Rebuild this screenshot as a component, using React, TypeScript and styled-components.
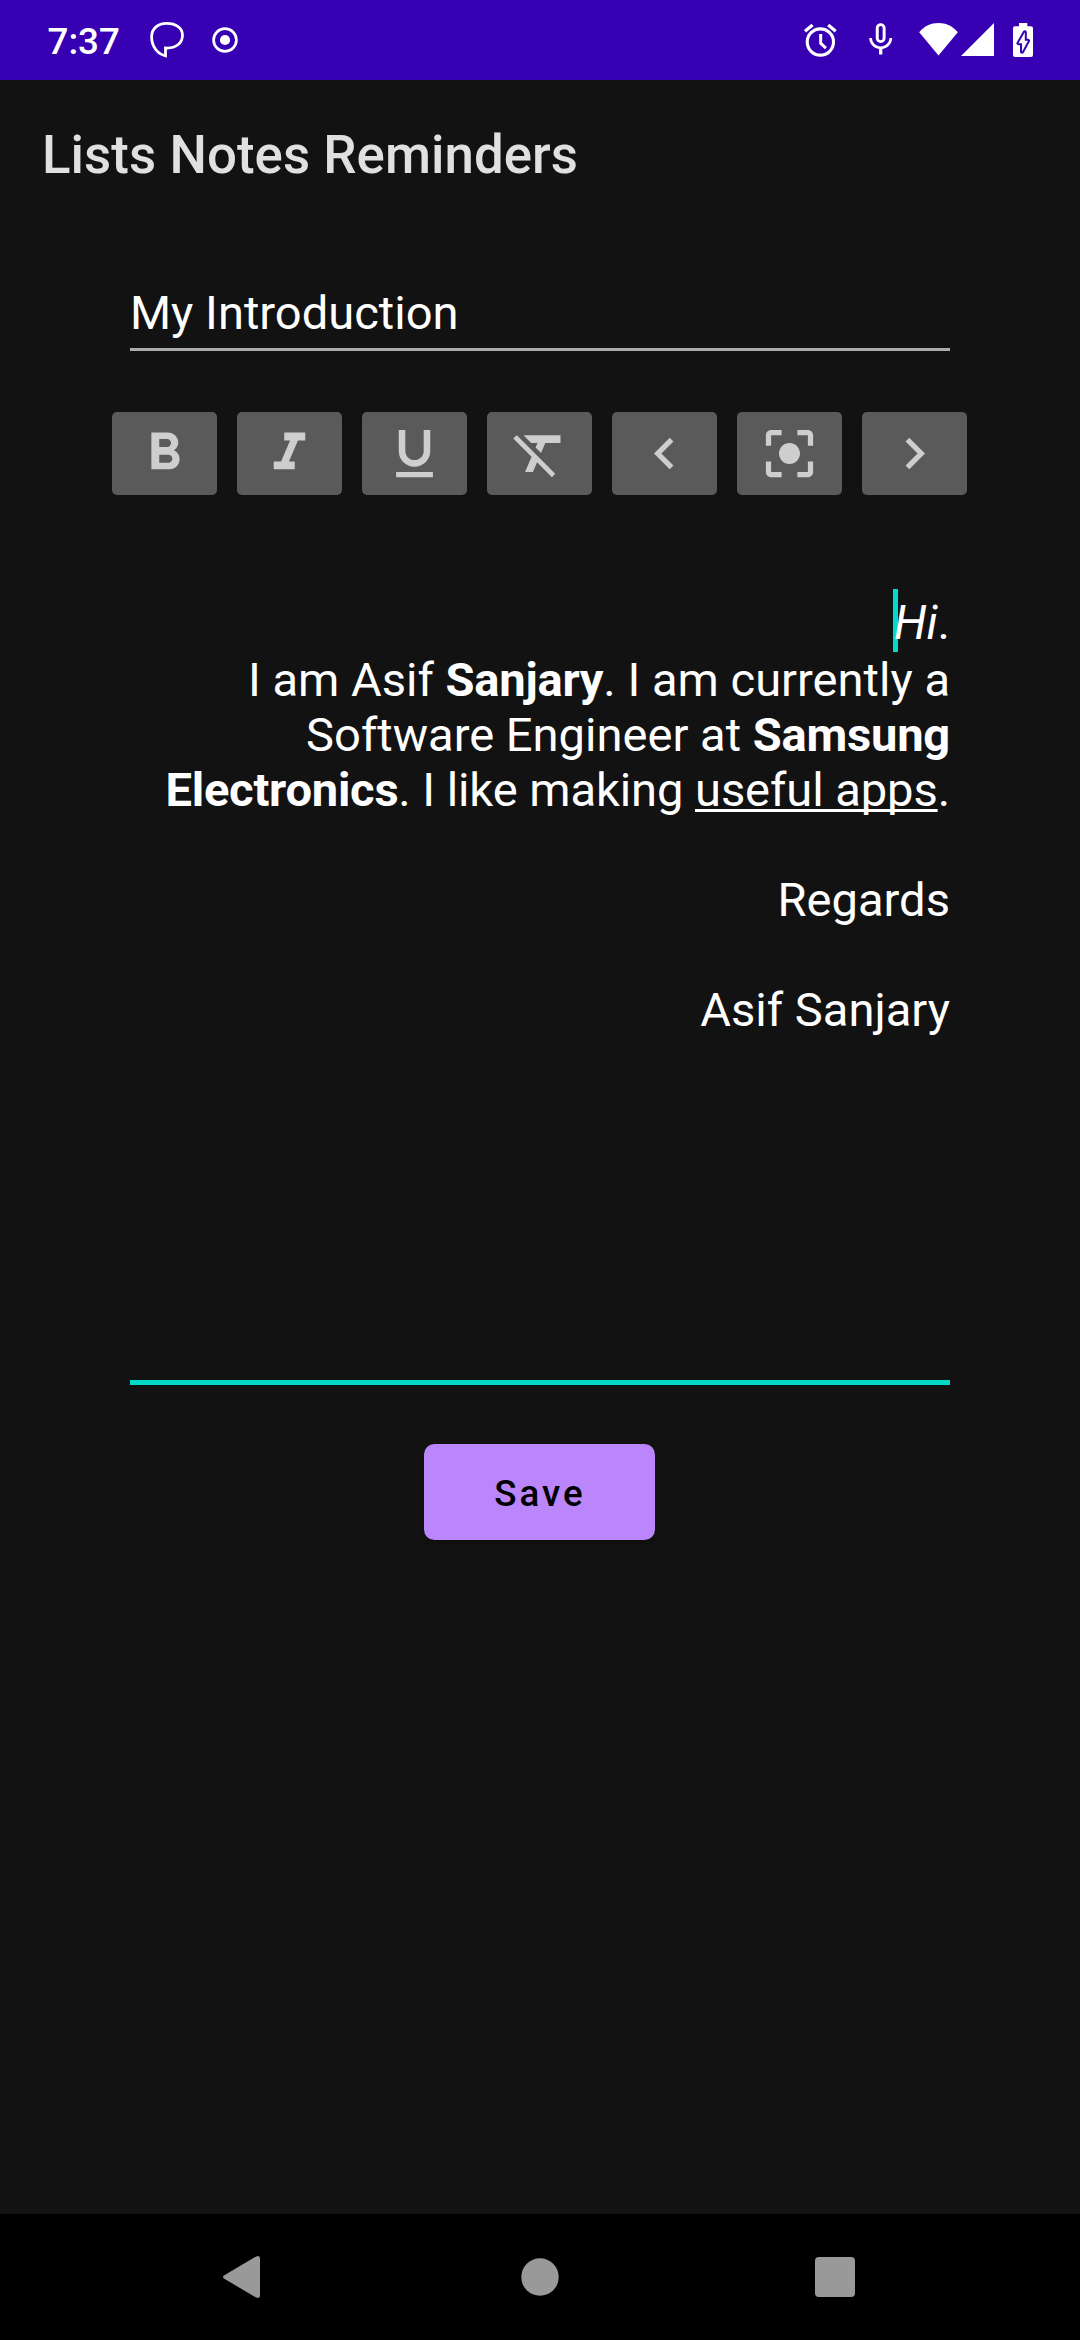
import React from 'react';
import styled, { createGlobalStyle } from 'styled-components';
import {
  MdCenterFocusStrong,
  MdChevronLeft,
  MdChevronRight,
  MdFormatBold,
  MdFormatClear,
  MdFormatItalic,
  MdFormatUnderlined,
  MdMicNone,
} from 'react-icons/md';

const GlobalStyle = createGlobalStyle`
  *, *::before, *::after { box-sizing: border-box; }
  body {
    margin: 0;
    background: #121212;
    font-family: Roboto, "Noto Sans", sans-serif;
  }
`;

const Screen = styled.div`
  display: flex;
  flex-direction: column;
  width: 1080px;
  height: 2340px;
  background: #121212;
  color: #fff;
  overflow: hidden;
`;

const StatusBar = styled.header`
  display: flex;
  align-items: center;
  height: 80px;
  padding: 0 47px;
  background: #3700b3;
`;

const Clock = styled.span`
  width: 103px;
  padding: 2px 0 0 0.5px;
  font-size: 36.75px;
  font-weight: 500;
  line-height: 43px;
`;

const StatusGlyph = styled.svg<{ $gap?: number }>`
  flex: none;
  display: block;
  margin-left: ${({ $gap = 0 }) => $gap}px;
  fill: #fff;
`;

const StatusIcons = styled.div`
  display: flex;
  align-items: center;
  margin-left: auto;

  svg { flex: none; }
`;

const MicIcon = styled(MdMicNone)`
  margin-left: 21px;
`;

const AppBar = styled.h1`
  margin: 0;
  height: 147px;
  padding: 3px 42px 0;
  display: flex;
  align-items: center;
  font-size: 52.8px;
  font-weight: 500;
  line-height: 62px;
  letter-spacing: 0.06px;
  color: #e0e0e0;
`;

const Main = styled.main`
  flex: 1;
  display: flex;
  flex-direction: column;
  align-items: center;
`;

const TitleField = styled.div`
  width: 820px;
  height: 66px;
  margin-top: 58px;
  border-bottom: 3px solid #abacac;
  font-size: 47.1px;
  line-height: 55px;
  white-space: nowrap;
`;

const Toolbar = styled.div`
  display: flex;
  gap: 20px;
  margin-top: 61px;
  padding-right: 1px;
`;

const ToolButton = styled.button`
  display: flex;
  align-items: center;
  justify-content: center;
  width: 105px;
  height: 83px;
  padding: 0;
  border: 0;
  border-radius: 5px;
  background: #5a5a5b;
  color: #cecece;

  svg { width: 63px; height: 63px; }
`;

const NoteField = styled.div`
  width: 820px;
  height: 796px;
  margin-top: 94px;
  border-bottom: 5px solid #03dac5;
  font-size: 47.1px;
  line-height: 55px;
  text-align: right;
`;

const NoteLine = styled.p<{ $first?: boolean; $tight?: boolean }>`
  margin: 0;
  height: ${({ $first }) => ($first ? 63 : 55)}px;
  padding-top: ${({ $first }) => ($first ? 6 : 0)}px;
  letter-spacing: ${({ $tight }) => ($tight ? '-0.08px' : 'normal')};
  white-space: nowrap;

  b { font-weight: 700; letter-spacing: -0.24px; }
  u {
    text-decoration-thickness: 3px;
    text-underline-offset: 3px;
    text-decoration-skip-ink: none;
  }
`;

const CaretAnchor = styled.span`
  position: relative;
`;

const Caret = styled.span`
  position: absolute;
  left: -1px;
  top: -6px;
  width: 5px;
  height: 63px;
  background: #03dac5;
`;

const Emphasis = styled.i`
  position: relative;
`;

const SaveButton = styled.button`
  width: 231px;
  height: 96px;
  margin-top: 59px;
  margin-right: 1px;
  padding: 3px 0 0 1px;
  border: 0;
  border-radius: 10.5px;
  background: #bb86fc;
  color: #000;
  font-family: inherit;
  font-size: 36.75px;
  font-weight: 500;
  line-height: 43px;
  letter-spacing: 3px;
  box-shadow: 0 3px 5px rgba(0, 0, 0, 0.2);
`;

const NavBar = styled.nav`
  display: flex;
  align-items: center;
  justify-content: space-between;
  height: 126px;
  padding: 0 213px;
  background: #000;
`;

const NavGlyph = styled.svg`
  display: block;
  fill: #999;
`;

const tools = [
  { name: 'Bold', Icon: MdFormatBold },
  { name: 'Italic', Icon: MdFormatItalic },
  { name: 'Underline', Icon: MdFormatUnderlined },
  { name: 'Clear formatting', Icon: MdFormatClear },
  { name: 'Align left', Icon: MdChevronLeft },
  { name: 'Align center', Icon: MdCenterFocusStrong },
  { name: 'Align right', Icon: MdChevronRight },
];

export default function App() {
  return (
    <>
      <GlobalStyle />
      <Screen>
        <StatusBar>
          <Clock>7:37</Clock>
          <StatusGlyph width="34" height="36" viewBox="0 0 34 36">
            <path
              d="M16.7 1.4C7.6 1.4 1.6 7 1.6 14.7C1.6 25 8 32.2 15.5 33.8V26C26 26.6 32.5 21 32.5 13.2C32.5 6 26 1.4 16.7 1.4Z"
              fill="none"
              stroke="#fff"
              strokeWidth="2.8"
            />
          </StatusGlyph>
          <StatusGlyph $gap={26.7} width="28" height="28" viewBox="0 0 28 28">
            <circle cx="14" cy="14" r="11.4" fill="none" stroke="#fff" strokeWidth="2.7" />
            <circle cx="14" cy="14" r="5.1" />
          </StatusGlyph>
          <StatusIcons>
            <StatusGlyph width="39.4" height="39.4" viewBox="0.2 -0.4 24 24">
              <path d="M22 5.72l-4.6-3.86-1.29 1.53 4.6 3.86L22 5.72zM7.88 3.39L6.6 1.86 2 5.71l1.29 1.53 4.59-3.85z" />
              <circle cx="12" cy="13" r="8" fill="none" stroke="#fff" strokeWidth="1.9" />
              <path d="M12.2 8.1V13.8L15.4 16.7" fill="none" stroke="#fff" strokeWidth="1.8" />
            </StatusGlyph>
            <MicIcon size={39.4} />
            <StatusGlyph $gap={18.5} width="40" height="36" viewBox="0 0 40 36">
              <path d="M0.2 10.2C5.2 4 12 1 19.5 1S33.6 4 38.8 10.2L19.5 33.5Z" />
            </StatusGlyph>
            <StatusGlyph $gap={2} width="34" height="36" viewBox="0 0 34 36">
              <path d="M0 34L33 1V34Z" />
            </StatusGlyph>
            <StatusGlyph $gap={18} width="20" height="36" viewBox="0 0 20 36">
              <path d="M6 1h8.3v3.2H18A2 2 0 0 1 20 6.2V33a2 2 0 0 1-2 2H2a2 2 0 0 1-2-2V6.2A2 2 0 0 1 2 4.2h4Z" />
              <path
                d="M11.8 10.3L5.5 21.3H9V29.7L15 18.7H11.8Z"
                stroke="#3700b3"
                strokeWidth="4"
                strokeLinejoin="round"
                paintOrder="stroke"
              />
            </StatusGlyph>
          </StatusIcons>
        </StatusBar>
        <AppBar>Lists Notes Reminders</AppBar>
        <Main>
          <TitleField>My Introduction</TitleField>
          <Toolbar>
            {tools.map(({ name, Icon }) => (
              <ToolButton key={name} aria-label={name}>
                <Icon />
              </ToolButton>
            ))}
          </Toolbar>
          <NoteField>
            <NoteLine $first>
              <CaretAnchor>
                <Caret />
              </CaretAnchor>
              <Emphasis>Hi</Emphasis>.
            </NoteLine>
            <NoteLine>
              I am Asif <b>Sanjary</b>. I am currently a
            </NoteLine>
            <NoteLine>
              Software Engineer at <b>Samsung</b>
            </NoteLine>
            <NoteLine $tight>
              <b>Electronics</b>. I like making <u>useful apps</u>.
            </NoteLine>
            <NoteLine />
            <NoteLine>Regards</NoteLine>
            <NoteLine />
            <NoteLine>Asif Sanjary</NoteLine>
          </NoteField>
          <SaveButton>Save</SaveButton>
        </Main>
        <NavBar>
          <NavGlyph width="60" height="60" viewBox="0 0 60 60">
            <path d="M11.3 28.2L43.3 9.4Q47 8 47 11.5V48.5Q47 52 43.3 50.6L11.3 31.8Q8.7 30 11.3 28.2Z" />
          </NavGlyph>
          <NavGlyph width="60" height="60" viewBox="0 0 60 60">
            <circle cx="30" cy="30" r="18.7" />
          </NavGlyph>
          <NavGlyph width="60" height="60" viewBox="0 0 60 60">
            <rect x="8" y="10" width="40" height="40" rx="4" />
          </NavGlyph>
        </NavBar>
      </Screen>
    </>
  );
}
